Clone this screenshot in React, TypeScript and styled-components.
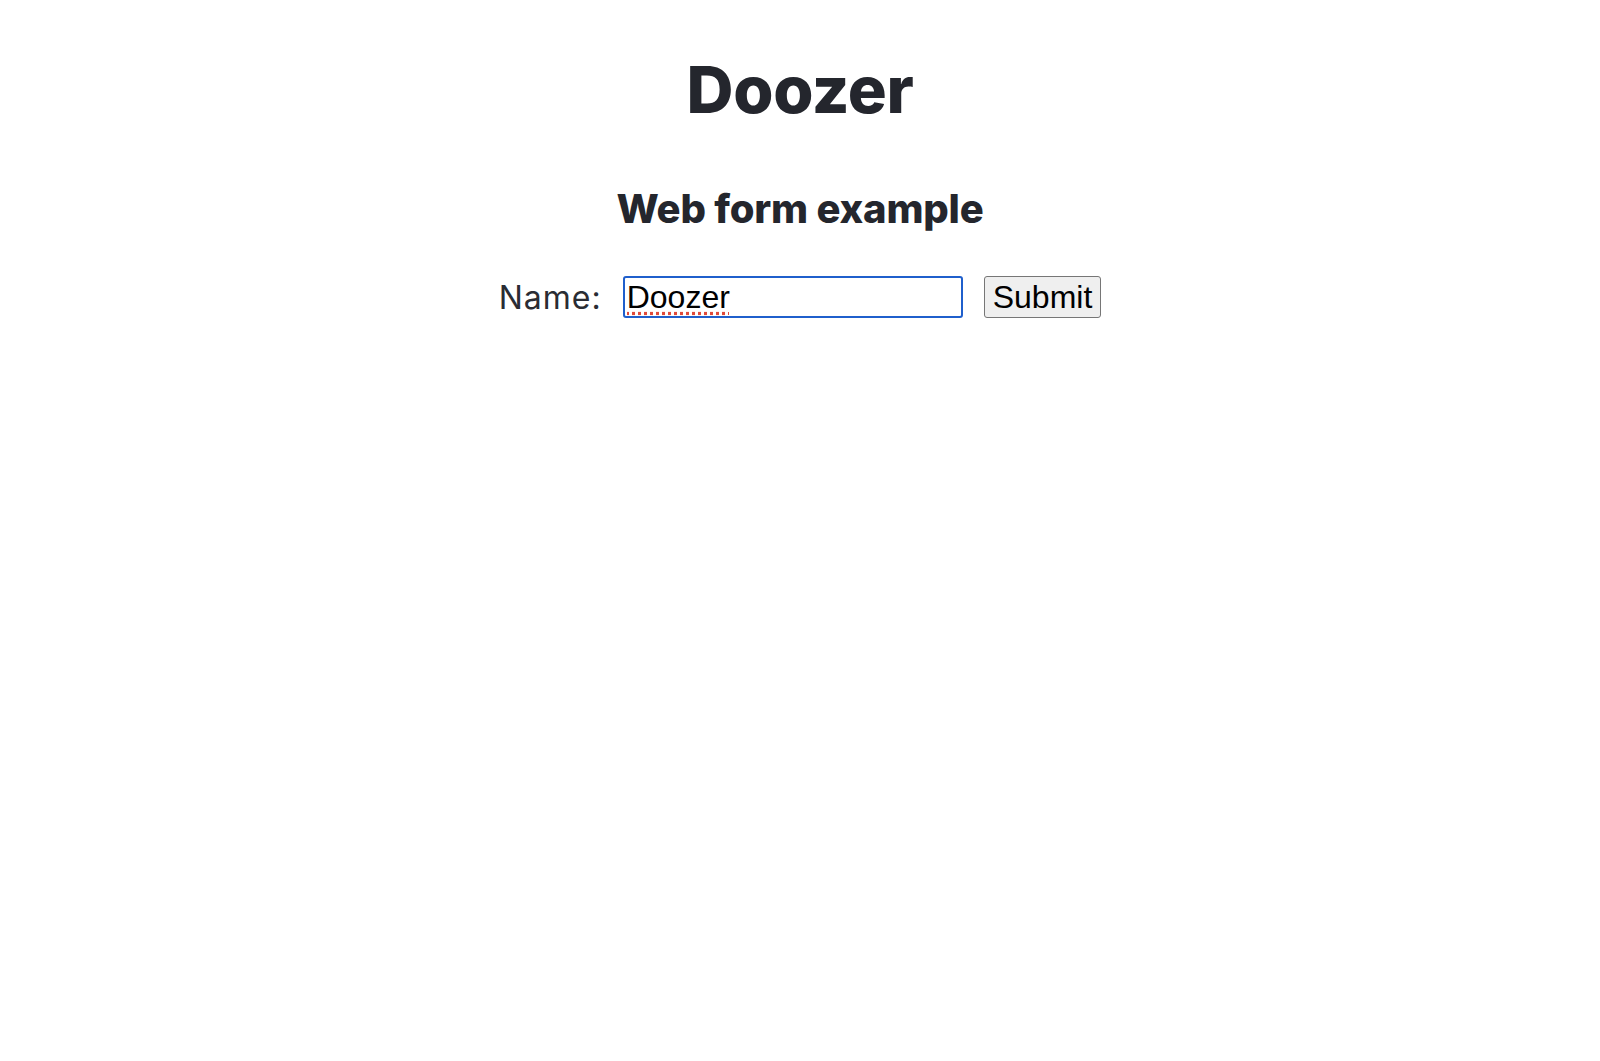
import styled, { createGlobalStyle } from "styled-components";

const Global = createGlobalStyle`
  html, body {
    margin: 0;
    padding: 0;
    background: #ffffff;
  }
  body {
    font-family: Inter, "Noto Sans", sans-serif;
    color: #24262d;
  }
`

const Page = styled.main`
  display: flex;
  flex-direction: column;
  align-items: center;
  padding-top: 52px;
`
const Title = styled.h1`
  margin: 0;
  font-size: 65px;
  font-weight: 800;
  line-height: 76px;
  letter-spacing: -0.3px;
`
const Heading = styled.h2`
  margin: 58px 0 0;
  font-size: 40px;
  font-weight: 800;
  line-height: 46px;
  letter-spacing: -0.2px;
`
const Form = styled.form`
  display: flex;
  align-items: center;
  gap: 21px;
  margin-top: 44px;
`
const Label = styled.label`
  font-size: 32px;
  font-weight: 400;
  letter-spacing: 1px;
  color: #2a2c33;
`
const Input = styled.input`
  box-sizing: border-box;
  width: 340px;
  height: 42px;
  padding: 1px 2px;
  font-family: "Liberation Sans", Arial, sans-serif;
  font-size: 32px;
  color: #000;
  border: 2px solid #1f5fcc;
  border-radius: 3px;
  outline: none;
  text-decoration: underline dotted #e04a3a;
  text-underline-offset: 4px;
`
const Button = styled.button`
  box-sizing: border-box;
  height: 42px;
  padding: 1px 8px;
  font-family: "Liberation Sans", Arial, sans-serif;
  font-size: 32px;
  color: #000;
  background: #efefef;
  border: 1px solid #767676;
  border-radius: 3px;
`

export default function App() {
  return (
    <>
      <Global />
      <Page>
        <Title>Doozer</Title>
        <Heading>Web form example</Heading>
        <Form onSubmit={(e) => e.preventDefault()}>
          <Label htmlFor="name">Name:</Label>
          <Input id="name" type="text" defaultValue="Doozer" />
          <Button type="submit">Submit</Button>
        </Form>
      </Page>
    </>
  );
}
